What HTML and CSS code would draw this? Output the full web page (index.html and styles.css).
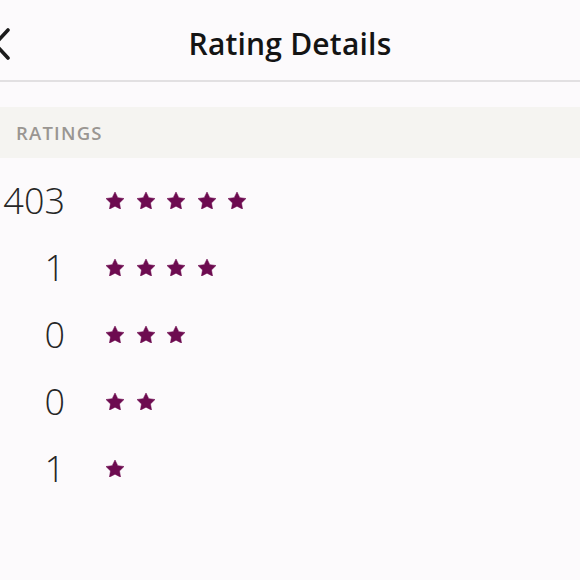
FILE: index.html
```html
<!DOCTYPE html>
<html lang="en">
<head>
<meta charset="utf-8">
<title>Rating Details</title>
<link rel="stylesheet" href="styles.css">
</head>
<body>
<header class="topbar">
  <div class="topbar-left">
    <svg class="back-icon" width="16" height="34" viewBox="0 0 16 34" aria-hidden="true">
      <polyline points="14,3 1,17 14,31" fill="none" stroke="#1b1b1b" stroke-width="3.6" stroke-linecap="round" stroke-linejoin="round"/>
    </svg>
  </div>
  <h1 class="title">Rating Details</h1>
  <div class="topbar-right"></div>
</header>
<div class="divider"></div>

<section class="section-head">RATINGS</section>

<ul class="ratings">
  <li class="row"><span class="count">403</span><span class="stars" data-n="5"></span></li>
  <li class="row"><span class="count">1</span><span class="stars" data-n="4"></span></li>
  <li class="row"><span class="count">0</span><span class="stars" data-n="3"></span></li>
  <li class="row"><span class="count">0</span><span class="stars" data-n="2"></span></li>
  <li class="row"><span class="count">1</span><span class="stars" data-n="1"></span></li>
</ul>

<script>
  var star = '<svg class="star" viewBox="2 2 20 19.1" aria-hidden="true"><path d="M12 2l3.09 6.26L22 9.27l-5 4.87 1.18 6.88L12 17.77l-6.18 3.25L7 14.14 2 9.27l6.91-1.01z" fill="#6d0b50" stroke="#6d0b50" stroke-width="0.6" stroke-linejoin="round"/></svg>';
  document.querySelectorAll('.stars').forEach(function (el) {
    var n = +el.getAttribute('data-n');
    var html = '';
    for (var i = 0; i < n; i++) html += star;
    el.innerHTML = html;
  });
</script>
</body>
</html>
```

FILE: styles.css
```css
html, body {
  margin: 0;
  padding: 0;
  background: #fcfafc;
  font-family: "Lato", "Open Sans", sans-serif;
  color: #1b1b1b;
}

.topbar {
  height: 80px;
  display: grid;
  grid-template-columns: 1fr auto 1fr;
  align-items: center;
}

.topbar-left {
  display: flex;
  align-items: center;
  padding-top: 8px;
}

.back-icon {
  display: block;
  margin-left: -6px;
}

.title {
  margin: 0;
  padding-top: 6px;
  font-family: "Open Sans", "Lato", sans-serif;
  font-size: 30px;
  font-weight: 600;
  letter-spacing: 0.2px;
  color: #141414;
}

.divider {
  height: 2px;
  background: #e2e0e2;
}

.section-head {
  margin-top: 25px;
  height: 51px;
  background: #f5f4f1;
  display: flex;
  align-items: center;
  padding-left: 16px;
  font-family: "Open Sans", "Lato", sans-serif;
  font-size: 18.5px;
  font-weight: 600;
  letter-spacing: 1.2px;
  color: #9a9692;
}

.ratings {
  list-style: none;
  margin: 0;
  padding: 9px 0 0;
}

.row {
  height: 67px;
  display: flex;
  align-items: center;
}

.count {
  width: 65px;
  text-align: right;
  font-family: "Open Sans", "Lato", sans-serif;
  font-size: 36px;
  font-weight: 300;
  color: #262626;
  line-height: 1;
}

.stars {
  display: flex;
  gap: 12.5px;
  margin-left: 41px;
}

.star {
  width: 18px;
  height: 17.2px;
  display: block;
}
```
